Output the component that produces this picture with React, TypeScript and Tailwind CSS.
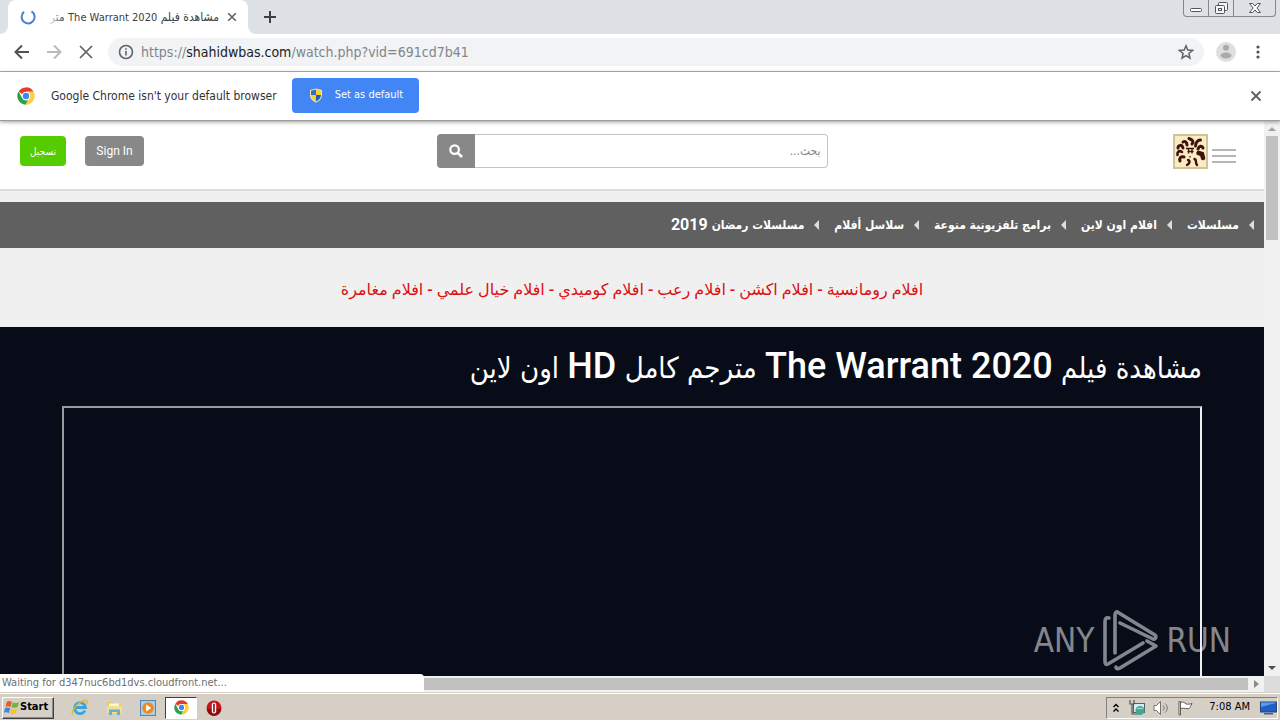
import type { ReactNode } from "react"

const NAV_ITEMS = [
  { label: "مسلسلات" },
  { label: "افلام اون لاين" },
  { label: "برامج تلفزيونية منوعة" },
  { label: "سلاسل أفلام" },
  { label: "مسلسلات رمضان", year: "2019" },
]

const GENRES = "افلام رومانسية - افلام اكشن - افلام رعب - افلام كوميدي - افلام خيال علمي - افلام مغامرة"

function CloseIcon({ size, stroke = 2 }: { size: number; stroke?: number }) {
  return (
    <svg width={size} height={size} viewBox="0 0 12 12" fill="none" stroke="#5f6368" strokeWidth={stroke}>
      <path d="M1.5 1.5l9 9M10.5 1.5l-9 9" />
    </svg>
  )
}

function ChromeIcon({ size }: { size: number }) {
  return (
    <svg width={size} height={size} viewBox="0 0 48 48">
      <circle cx="24" cy="24" r="23" fill="#fff" />
      <path d="M24 1a23 23 0 0 1 20 11.5H24A11.5 11.5 0 0 0 13.5 19.500L4.500 12A23 23 0 0 1 24 1z" fill="#e33b2e" />
      <path d="M44 12.500A23 23 0 0 1 23 47l10.500-16.500A11.500 11.500 0 0 0 24 12.500z" fill="#fdcf3c" />
      <path d="M4.200 12l10 18A11.500 11.500 0 0 0 30 34.200L23 47A23 23 0 0 1 4.200 12z" fill="#2da04c" />
      <circle cx="24" cy="24" r="11" fill="#fff" />
      <circle cx="24" cy="24" r="8.500" fill="#4285f4" />
    </svg>
  )
}

function ShieldIcon() {
  return (
    <svg width="14" height="15" viewBox="0 0 14 15">
      <path d="M7 0.500l6 1.500v5c0 3.500-2.500 6-6 7.500C3.500 13 1 10.500 1 7V2z" fill="#f5e6a0" />
      <path d="M7 1.500V7H2V2.800z" fill="#2f6fd0" />
      <path d="M7 1.500V7h5V2.800z" fill="#fbd02d" />
      <path d="M2 7h5v6.500C4 12 2 10 2 7z" fill="#fbd02d" />
      <path d="M12 7H7v6.500c3-1.500 5-3.500 5-6.500z" fill="#1f5fc0" />
    </svg>
  )
}

function TabStrip() {
  return (
    <div className="flex h-[34px] items-end bg-[#dee1e6]">
      <div className="h-full w-2 shrink-0 bg-white">
        <div className="h-full w-2 rounded-br-lg bg-[#dee1e6]" />
      </div>
      <div className="flex h-full w-60 shrink-0 items-center gap-2 rounded-t-lg bg-white pl-3 pr-[11px]">
        <svg className="mr-1" width="16" height="16" viewBox="0 0 16 16" fill="none" stroke="#4b7fd0" strokeWidth="2">
          <path d="M11.500 2.400A6.500 6.500 0 1 1 4 2.900" />
        </svg>
        <div dir="rtl" className="relative flex-1 whitespace-nowrap text-[12px] leading-5 text-[#3c4043]">
          مشاهدة فيلم <span className="text-[11px]">The Warrant 2020</span> متر
          <div className="absolute inset-y-0 left-0 w-4 bg-gradient-to-r from-white to-transparent" />
        </div>
        <button aria-label="Close tab"><CloseIcon size={10} /></button>
      </div>
      <div className="h-full w-2 bg-white">
        <div className="h-full w-2 rounded-bl-lg bg-[#dee1e6]" />
      </div>
      <button aria-label="New tab" className="mb-2.5 ml-2">
        <svg width="12" height="14" viewBox="0 0 12 14" stroke="#3c4043" strokeWidth="2">
          <path d="M6 1v12M0 7h12" />
        </svg>
      </button>
      <div className="ml-auto mr-1 flex h-[17px] self-start rounded-b border border-t-0 border-[#84888f] text-[#50545b]">
        <button aria-label="Minimize" className="flex w-[25px] items-center justify-center border-r border-[#84888f]">
          <svg width="12" height="16" viewBox="0 0 12 16" fill="#fff" stroke="currentColor">
            <rect x="0.500" y="8.500" width="11" height="3" rx="1" />
          </svg>
        </button>
        <button aria-label="Restore" className="flex w-[25px] items-center justify-center border-r border-[#84888f]">
          <svg width="13" height="16" viewBox="0 0 13 16" fill="#f4f5f7" stroke="currentColor">
            <rect x="3.500" y="2.500" width="9" height="8" rx="1" />
            <rect x="0.500" y="5.500" width="9" height="8" rx="1" />
            <rect x="3.500" y="8.500" width="3" height="2" />
          </svg>
        </button>
        <button aria-label="Close" className="flex w-[41px] items-center justify-center">
          <svg width="12" height="16" viewBox="0 0 12 16" fill="#fff" stroke="currentColor">
            <path d="M0.500 3.500h3.200L6 6l2.300-2.500h3.200L8 8l3.500 4.500H8.300L6 10l-2.300 2.500H0.500L4 8z" />
          </svg>
        </button>
      </div>
    </div>
  )
}

function Toolbar() {
  return (
    <div className="flex h-[38px] items-center border-b border-[#b3b3b5] bg-white pb-px pl-[14px] pr-4">
      <button aria-label="Back">
        <svg width="16" height="16" viewBox="0 0 16 16" fill="none" stroke="#505357" strokeWidth="2">
          <path d="M15 8H2M8 1.500L1.500 8L8 14.500" />
        </svg>
      </button>
      <button aria-label="Forward" className="ml-4">
        <svg width="16" height="16" viewBox="0 0 16 16" fill="none" stroke="#b9bbbe" strokeWidth="2">
          <path d="M1 8h13M8 1.500L14.500 8L8 14.500" />
        </svg>
      </button>
      <button aria-label="Stop" className="ml-4"><CloseIcon size={16} stroke={1.3} /></button>
      <div className="ml-3.5 flex h-7 flex-1 items-center rounded-full bg-[#f1f3f4] px-2.5">
        <svg width="16" height="16" viewBox="0 0 16 16" fill="none" stroke="#5f6368" strokeWidth="1.600">
          <circle cx="8" cy="8" r="6.500" />
          <path d="M8 7v4.500M8 4.200v1.600" />
        </svg>
        <div className="ml-[7px] flex-1 text-[14px] text-[#80868b]">
          https://<span className="text-[#202124]">shahidwbas.com</span>/watch.php?vid=691cd7b41
        </div>
        <button aria-label="Bookmark">
          <svg width="16" height="16" viewBox="0 0 16 16" fill="none" stroke="#5f6368" strokeWidth="1.500">
            <path d="M8 1.800l1.800 4.300 4.700.4-3.600 3 1.100 4.600L8 11.700l-4 2.400 1.100-4.600-3.600-3 4.700-.4z" />
          </svg>
        </button>
      </div>
      <button aria-label="Profile" className="ml-3">
        <svg width="20" height="20" viewBox="0 0 20 20">
          <circle cx="10" cy="10" r="10" fill="#dfdfe0" />
          <circle cx="10" cy="5.800" r="3" fill="#a9abad" />
          <ellipse cx="10" cy="13.500" rx="5.500" ry="3" fill="#a9abad" />
        </svg>
      </button>
      <button aria-label="Menu" className="ml-4">
        <svg width="12" height="14" viewBox="0 0 12 14" fill="#505357">
          <circle cx="6" cy="2" r="1.600" />
          <circle cx="6" cy="7" r="1.600" />
          <circle cx="6" cy="12" r="1.600" />
        </svg>
      </button>
    </div>
  )
}

function InfoBar() {
  return (
    <div className="relative z-10 flex h-[49px] items-center border-b border-[#9c9c9c] bg-white pb-px pl-[17px] pr-[18px] shadow-[0_1px_4px_rgba(0,0,0,0.4)]">
      <ChromeIcon size={18} />
      <span className="ml-4 text-[12px] text-[#303336]">Google Chrome isn't your default browser</span>
      <button className="ml-[15px] flex h-[35px] w-[127px] items-center gap-3 rounded bg-[#4285f4] pl-[17px] text-[11px] text-white">
        <ShieldIcon />
        Set as default
      </button>
      <button aria-label="Dismiss" className="ml-auto"><CloseIcon size={12} /></button>
    </div>
  )
}

function SiteLogo() {
  return (
    <svg width="35" height="35" viewBox="0 0 35 35">
      <rect x="1" y="1" width="33" height="33" fill="#faebc4" stroke="#d0c497" strokeWidth="2" />
      <g fill="none" stroke="#3d120b" strokeWidth="3" strokeLinecap="round">
        <path d="M19 10c2-2 1-4-3-5.500" />
        <path d="M22.500 12c0-3 2-6 5-6" />
        <path d="M25 15c1-3 4-4 5-1" />
        <path d="M25.500 19l3.500 1 1 4" strokeWidth="4.500" />
        <path d="M21.500 25c3 1 0 3 2.500 6" strokeWidth="2.400" />
        <path d="M15 26c3 1 1 4-1 5" strokeWidth="2.400" />
        <path d="M11 23c-3-1-5 1-4 4" />
        <path d="M9 18c-3-2-5 0-4.500 3" strokeWidth="2.600" />
        <path d="M10 14C9 10 5 11 5 14" />
        <path d="M14 11c0-3-2-4-4-3" />
      </g>
      <path d="M13 14.500h8M14.500 17.500h6M15.500 14.500v5M19 14.500v5M17 22v1.500" stroke="#3d120b" strokeWidth="1.300" />
    </svg>
  )
}

function SiteHeader() {
  return (
    <header className="flex h-[70px] shrink-0 items-start justify-between border-b-2 border-[#dcdcdc] bg-white px-5 pt-[13px]">
      <div className="mt-0.5 flex flex-1 gap-[19px]">
        <button className="h-[30px] w-[46px] rounded-sm bg-[#55cc00] text-[10px] text-white">تسجيل</button>
        <button className="h-[30px] w-[59px] rounded-sm bg-[#888] font-[Roboto] text-[12px] text-white">Sign In</button>
      </div>
      <form className="ml-2 flex h-[34px] w-[391px]">
        <button type="button" aria-label="Search" className="flex w-[38px] shrink-0 items-center justify-center rounded-l-sm bg-[#888]">
          <svg width="14" height="14" viewBox="0 0 14 14" fill="none" stroke="#fff" strokeWidth="2.200">
            <circle cx="5.600" cy="5.600" r="4.300" />
            <path d="M8.800 8.800l4.200 4.200" strokeWidth="2.600" />
          </svg>
        </button>
        <input
          dir="rtl"
          aria-label="Search"
          placeholder="بحث..."
          className="w-full rounded-r-sm border border-l-0 border-[#c4c4c4] px-1.5 text-[12px] outline-none placeholder:text-[#888]"
        />
      </form>
      <div className="flex flex-1 justify-end gap-1 pr-2">
        <a href="#" aria-label="Home"><SiteLogo /></a>
        <button aria-label="Toggle menu" className="mt-[15px] flex h-[14px] w-6 flex-col justify-between">
          <span className="h-0.5 w-full bg-[#b5b5b5]" />
          <span className="h-0.5 w-full bg-[#b5b5b5]" />
          <span className="h-0.5 w-full bg-[#b5b5b5]" />
        </button>
      </div>
    </header>
  )
}

function SiteNav() {
  return (
    <nav dir="rtl" className="mt-[11px] flex h-[46px] shrink-0 items-center gap-[15px] bg-[#606060] pr-2.5">
      {NAV_ITEMS.map((item) => (
        <a key={item.label} href="#" className="flex items-center whitespace-nowrap text-[12px] font-bold text-white">
          <svg className="ml-2.5" width="5" height="10" viewBox="0 0 5 10" fill="#ddd">
            <path d="M5 0v10L0 5z" />
          </svg>
          {item.label}
          {item.year && <span className="mr-1 font-[Roboto] text-[16px]">{item.year}</span>}
        </a>
      ))}
    </nav>
  )
}

function Watermark() {
  return (
    <div className="absolute bottom-1 right-[33px] flex items-center gap-2 text-[33px] text-white opacity-50">
      <span>ANY</span>
      <svg width="56" height="62" viewBox="0 0 56 62" fill="none" stroke="currentColor" strokeWidth="3.600" strokeLinecap="round" strokeLinejoin="round">
        <path d="M7 8C4 7 3 9 3 12v39c0 3 1 4 3 3l35-21" />
        <path d="M13 43V5c0-3 2-4 4-2l36 22c2 2 0 5-2 4L18 13" />
        <path d="M45 31l9 5-36 22c-2 1-4 1-4-1" />
      </svg>
      <span>RUN</span>
    </div>
  )
}

function Page() {
  return (
    <main className="relative flex min-w-0 flex-1 flex-col overflow-hidden bg-[#f0f0f0]">
      <SiteHeader />
      <SiteNav />
      <p dir="rtl" className="flex h-[79px] shrink-0 items-center justify-center pt-1 font-[Roboto,'DejaVu_Sans',sans-serif] text-[16px] font-medium text-[#dd1111]">
        {GENRES}
      </p>
      <section dir="rtl" className="flex flex-1 flex-col bg-[#070c18]">
        <div className="mx-auto flex w-full max-w-[1140px] flex-1 flex-col">
          <h1 className="h-[79px] whitespace-nowrap text-[29px] leading-[79px] text-white">
            مشاهدة فيلم <span className="font-[Roboto] text-[36px] font-medium">The Warrant 2020</span> مترجم كامل{" "}
            <span className="font-[Roboto] text-[36px] font-medium">HD</span> اون لاين
          </h1>
          <div className="flex-1 border-2 border-b-0 border-[#9a9a9f] border-r-[#eeeeee]" />
        </div>
      </section>
      <Watermark />
    </main>
  )
}

function VerticalScrollbar() {
  return (
    <div className="flex w-4 flex-col items-center bg-[#f1f1f1] py-1">
      <svg width="8" height="8" viewBox="0 0 8 8" fill="#a3a3a3"><path d="M0 6h8L4 2z" /></svg>
      <div className="mt-[3px] h-[104px] w-3 bg-[#c1c1c1]" />
      <svg className="mt-auto" width="8" height="8" viewBox="0 0 8 8" fill="#505050"><path d="M0 2h8L4 6z" /></svg>
    </div>
  )
}

function HorizontalScrollbar() {
  return (
    <div className="relative flex h-4 shrink-0 bg-[#f1f1f1]">
      <div className="my-0.5 flex-1 bg-[#c1c1c1]" />
      <div className="flex w-4 items-center justify-center">
        <svg width="5" height="8" viewBox="0 0 5 8" fill="#8a8a8a"><path d="M0 0v8l5-4z" /></svg>
      </div>
      <div className="w-4 bg-[#dcdcdc]" />
      <div className="absolute bottom-0 left-0 h-[18px] w-[424px] rounded-tr bg-white pl-0.5 text-[11px] leading-[18px] text-[#6c6f73]">
        Waiting for d347nuc6bd1dvs.cloudfront.net...
      </div>
    </div>
  )
}

function TaskIcon({ label, children }: { label: string; children: ReactNode }) {
  return <button aria-label={label} className="flex h-[22px] w-[34px] items-center justify-center">{children}</button>
}

function Taskbar() {
  return (
    <footer className="flex h-7 shrink-0 items-center border-t border-[#d6d0c6] bg-[#d6cfc5] shadow-[inset_0_1px_0_#ffffff]">
      <button className="ml-0.5 mt-0.5 flex h-[22px] w-[52px] items-center border border-white border-b-[#404040] border-r-[#404040] pl-px text-[11px] font-bold text-black shadow-[inset_-1px_-1px_0_#888]">
        <svg width="16" height="15" viewBox="0 0 16 15">
          <path d="M3 1.500c2-1 3.500-.6 5 .3L6.600 7C5 6 3.500 6 1.500 6.700z" fill="#e8592b" />
          <path d="M9 2.200c2 1 4 .9 6-.2l-1.500 5c-2 1-4 1-6 .2z" fill="#6eb53c" />
          <path d="M1.200 8c2-.8 3.500-.7 5 .2L4.800 13C3.400 12 2 12-.2 12.700z" fill="#3b8bd6" />
          <path d="M7.200 8.500c2 1 4 .9 6-.1l-1.500 5c-2 1-4 1-6 .1z" fill="#f7c331" />
        </svg>
        Start
      </button>
      <div className="ml-[9px] mt-0.5 flex items-center">
        <TaskIcon label="Internet Explorer">
          <svg width="18" height="17" viewBox="0 0 18 17" fill="none">
            <path d="M14 11.500A5.500 5.500 0 1 1 14.500 8.500H5" stroke="#37a3e0" strokeWidth="2.800" />
            <path d="M2 15.500C-1 13 7 2.500 14 1.500c3-.3 2.500 2.500 1.500 4" stroke="#e5b62f" strokeWidth="1.300" />
          </svg>
        </TaskIcon>
        <TaskIcon label="Explorer">
          <svg width="17" height="16" viewBox="0 0 17 16">
            <path d="M1 2h5l1.500 2H15v9H1z" fill="#e8c966" />
            <path d="M3 3.500h10v3H3z" fill="#fff5cf" />
            <path d="M1 6h15v7H1z" fill="#f5df8d" />
            <path d="M3 15V9.500h11V15h-3v-3H6v3z" fill="#62b1dd" />
          </svg>
        </TaskIcon>
        <TaskIcon label="Media Player">
          <svg width="16" height="16" viewBox="0 0 16 16">
            <rect x="0.500" y="0.500" width="15" height="15" fill="#a9cdec" stroke="#4f86b7" />
            <circle cx="8" cy="8" r="5.800" fill="#f08a1d" />
            <path d="M6.200 4.500v7l5-3.500z" fill="#fff" />
          </svg>
        </TaskIcon>
        <button aria-label="Google Chrome" className="flex h-[22px] w-8 items-center justify-center border border-[#404040] border-b-white border-r-white bg-white">
          <ChromeIcon size={15} />
        </button>
        <TaskIcon label="Opera">
          <svg width="16" height="16" viewBox="0 0 16 16">
            <circle cx="8" cy="8" r="7.500" fill="#c4171c" />
            <path d="M1 9a7 7 0 0 0 14 0z" fill="#8d0c10" />
            <rect x="5.800" y="2.500" width="4.400" height="11" rx="2.200" fill="#fff" />
            <rect x="7.200" y="3.500" width="1.600" height="9" rx="0.800" fill="#8d0c10" />
          </svg>
        </TaskIcon>
      </div>
      <div className="ml-auto mr-0.5 mt-0.5 flex h-[22px] items-center border border-[#85817a] border-b-white border-r-white pl-1.5 text-[11px] text-black">
        <svg width="6" height="10" viewBox="0 0 6 10" fill="none" stroke="#000" strokeWidth="1.400">
          <path d="M0.500 4L3 1.500L5.500 4M0.500 8.500L3 6l2.500 2.500" />
        </svg>
        <svg className="ml-2.5" width="16" height="16" viewBox="0 0 16 16">
          <rect x="4.500" y="3.500" width="11" height="9" fill="#d6edf5" stroke="#4d6470" />
          <path d="M1 0v4h4V0M3 4v10h6" fill="none" stroke="#555" strokeWidth="1.200" />
          <circle cx="11" cy="10.500" r="4.500" fill="#3fa793" />
          <path d="M8 9c2-2 4 1 6-1" stroke="#b9eadb" fill="none" />
        </svg>
        <svg className="ml-2" width="16" height="16" viewBox="0 0 16 16" fill="#fff" stroke="#75726c">
          <path d="M1 5.500h2.500L7.500 1.500v13L3.500 10.500H1z" />
          <path d="M10 5.500c1.500 1.500 1.500 3.500 0 5M12 3.500c3 2.500 3 6.500 0 9" fill="none" />
        </svg>
        <svg className="ml-2" width="16" height="16" viewBox="0 0 16 16" fill="#fff" stroke="#5f5c57">
          <path d="M2 15V1.500h1.500V15zM3.500 2.500c3-1 4 0 5.500 1.500 2 .5 4 0 6-.5-1 2-2 4-3 5-3 .8-4-1-8.500 0z" />
        </svg>
        <span className="ml-4">7:08 AM</span>
        <svg className="ml-2.5" width="17" height="14" viewBox="0 0 17 14">
          <rect x="0.500" y="1" width="16" height="10" fill="#1f5fc4" stroke="#22457c" />
          <path d="M1 6l15-4v-0.500H1z" fill="#5c9be8" />
          <path d="M4 12h9v1.500H4z" fill="#47617f" />
        </svg>
      </div>
    </footer>
  )
}

export default function App() {
  return (
    <div className="flex h-screen flex-col overflow-hidden bg-white font-['DejaVu_Sans_Condensed','DejaVu_Sans',sans-serif]">
      <TabStrip />
      <Toolbar />
      <InfoBar />
      <div className="flex min-h-0 flex-1">
        <Page />
        <VerticalScrollbar />
      </div>
      <HorizontalScrollbar />
      <Taskbar />
    </div>
  )
}
